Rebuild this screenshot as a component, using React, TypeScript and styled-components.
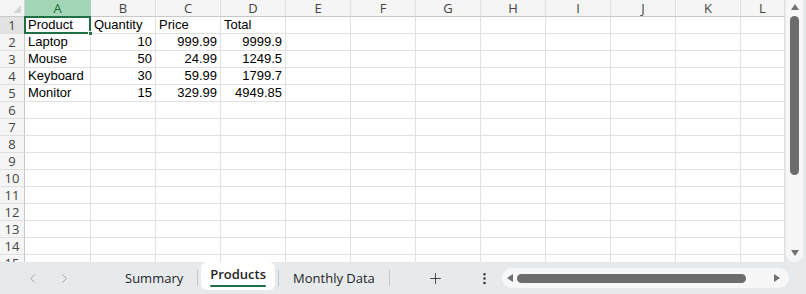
import React from 'react';
import styled, { createGlobalStyle } from 'styled-components';
import { ChevronLeft, ChevronRight, Plus, EllipsisVertical } from 'lucide-react';

const GlobalStyle = createGlobalStyle`
  html, body {
    margin: 0;
    padding: 0;
    background: #e7eaed;
  }
  * {
    box-sizing: border-box;
  }
`;

const Frame = styled.div`
  width: 806px;
  height: 294px;
  display: flex;
  flex-direction: column;
  overflow: hidden;
  background-color: #e7eaed;
`;

const Main = styled.div`
  display: flex;
  height: 262px;
`;

const Sheet = styled.div`
  width: 785px;
  height: 262px;
  overflow: hidden;
  background-color: #ffffff;
  display: grid;
  grid-template-columns: 25px 66px repeat(10, 65px) 44px;
  grid-auto-rows: 17px;
  align-content: start;
`;

const Corner = styled.div`
  position: relative;
  background-color: #f5f5f5;
  border-right: 1px solid #d4d4d4;
  border-bottom: 1px solid #c8c8c8;

  &::after {
    content: '';
    position: absolute;
    right: 3px;
    bottom: 3px;
    width: 0;
    height: 0;
    border-left: 8px solid transparent;
    border-bottom: 8px solid #d6d6d6;
  }
`;

const ColHeader = styled.div<{ $active?: boolean }>`
  display: flex;
  align-items: center;
  justify-content: center;
  font-family: 'Open Sans', 'Liberation Sans', sans-serif;
  font-size: 13px;
  line-height: 16px;
  color: ${(p) => (p.$active ? '#1b6a3c' : '#444444')};
  background-color: ${(p) => (p.$active ? '#a3d6b6' : '#f5f5f5')};
  border-right: 1px solid ${(p) => (p.$active ? '#a3d6b6' : '#e0e0e0')};
  border-bottom: 1px solid ${(p) => (p.$active ? '#1f7145' : '#c8c8c8')};
`;

const RowHeader = styled.div<{ $active?: boolean }>`
  display: flex;
  align-items: center;
  justify-content: center;
  font-family: 'Open Sans', 'Liberation Sans', sans-serif;
  font-size: 13px;
  line-height: 16px;
  color: #444444;
  background-color: ${(p) => (p.$active ? '#e2e2e2' : '#f5f5f5')};
  border-right: 1px solid ${(p) => (p.$active ? '#1f7145' : '#c8c8c8')};
  border-bottom: 1px solid #e0e0e0;
`;

const Cell = styled.div<{ $num?: boolean; $selected?: boolean }>`
  position: relative;
  font-family: 'Liberation Sans', Arial, sans-serif;
  font-size: 13px;
  line-height: 16px;
  color: #000000;
  white-space: nowrap;
  text-align: ${(p) => (p.$num ? 'right' : 'left')};
  padding: 0 3px;
  border-right: 1px solid #e1e1e1;
  border-bottom: 1px solid #e1e1e1;
  z-index: ${(p) => (p.$selected ? 2 : 'auto')};

  ${(p) =>
    p.$selected &&
    `
    &::after {
      content: '';
      position: absolute;
      left: -1px;
      top: -1px;
      right: -1px;
      bottom: -1px;
      border: 2px solid #1f7145;
      pointer-events: none;
    }
  `}
`;

const FillHandle = styled.span`
  position: absolute;
  right: -3px;
  bottom: -3px;
  width: 5px;
  height: 5px;
  background-color: #1f7145;
  border: 1px solid #ffffff;
  z-index: 3;
`;

const VScroll = styled.div`
  width: 21px;
  height: 262px;
  padding: 0 3px 0 1px;
  background-color: #e7eaed;
`;

const VTrack = styled.div`
  height: 100%;
  background-color: #f7f7f7;
  border-radius: 0 0 8px 8px;
  display: flex;
  flex-direction: column;
  align-items: center;
  padding-top: 4px;
  padding-bottom: 6px;
`;

const Arrow = styled.span<{ $dir: 'up' | 'down' | 'left' | 'right' }>`
  width: 0;
  height: 0;
  flex-shrink: 0;
  ${(p) => p.$dir === 'up' && `border-left: 4px solid transparent; border-right: 4px solid transparent; border-bottom: 6px solid #707070;`}
  ${(p) => p.$dir === 'down' && `border-left: 4px solid transparent; border-right: 4px solid transparent; border-top: 6px solid #707070;`}
  ${(p) => p.$dir === 'left' && `border-top: 4px solid transparent; border-bottom: 4px solid transparent; border-right: 6px solid #707070;`}
  ${(p) => p.$dir === 'right' && `border-top: 4px solid transparent; border-bottom: 4px solid transparent; border-left: 6px solid #707070;`}
`;

const VThumb = styled.div`
  width: 9px;
  height: 159px;
  margin-top: 6px;
  border-radius: 5px;
  background-color: #6c6c6c;
`;

const Spacer = styled.div`
  flex: 1;
`;

const TabBar = styled.div`
  height: 32px;
  display: flex;
  align-items: center;
  padding-left: 16px;
  font-family: 'Open Sans', 'Liberation Sans', sans-serif;
  font-size: 13px;
  color: #242424;
`;

const NavButton = styled.div`
  width: 32px;
  height: 32px;
  display: flex;
  align-items: center;
  justify-content: center;
  color: #a0a0a0;
`;

const Tabs = styled.div`
  display: flex;
  align-items: center;
  height: 100%;
  margin-left: 31px;
`;

const Tab = styled.div<{ $active?: boolean }>`
  height: ${(p) => (p.$active ? '28px' : '32px')};
  align-self: flex-start;
  display: flex;
  align-items: center;
  padding: ${(p) => (p.$active ? '0 9px 4px' : '0 14px')};
  margin: ${(p) => (p.$active ? '0 3px' : '0')};
  background-color: ${(p) => (p.$active ? '#ffffff' : 'transparent')};
  border-radius: ${(p) => (p.$active ? '6px' : '0')};
  font-weight: ${(p) => (p.$active ? 600 : 400)};
  position: relative;
  white-space: nowrap;

  ${(p) =>
    p.$active &&
    `
    &::after {
      content: '';
      position: absolute;
      left: 9px;
      right: 9px;
      bottom: 3px;
      height: 2px;
      background-color: #1f7145;
      border-radius: 1px;
    }
  `}
`;

const Separator = styled.span`
  width: 1px;
  height: 16px;
  background-color: #c4c7ca;
`;

const IconButton = styled.div<{ $w: number; $ml: number }>`
  width: ${(p) => p.$w}px;
  margin-left: ${(p) => p.$ml}px;
  height: 32px;
  display: flex;
  align-items: center;
  justify-content: center;
  color: #333333;
`;

const HScroll = styled.div`
  width: 287px;
  height: 20px;
  margin-left: 7px;
  background-color: #f7f7f7;
  border-radius: 10px;
  display: flex;
  align-items: center;
  padding: 0 9px 0 5px;
`;

const HThumb = styled.div`
  width: 229px;
  height: 9px;
  margin-left: 4px;
  border-radius: 5px;
  background-color: #6c6c6c;
`;

const columns = ['A', 'B', 'C', 'D', 'E', 'F', 'G', 'H', 'I', 'J', 'K', 'L'];

const data: (string | number)[][] = [
  ['Product', 'Quantity', 'Price', 'Total'],
  ['Laptop', 10, '999.99', '9999.9'],
  ['Mouse', 50, '24.99', '1249.5'],
  ['Keyboard', 30, '59.99', '1799.7'],
  ['Monitor', 15, '329.99', '4949.85'],
];

const sheets = ['Summary', 'Products', 'Monthly Data'];

const App: React.FC = () => {
  const rows = Array.from({ length: 15 }, (_, i) => i + 1);

  return (
    <Frame>
      <GlobalStyle />
      <Main>
        <Sheet>
          <Corner />
          {columns.map((c) => (
            <ColHeader key={c} $active={c === 'A'}>
              {c}
            </ColHeader>
          ))}
          {rows.map((r) => (
            <React.Fragment key={r}>
              <RowHeader $active={r === 1}>{r}</RowHeader>
              {columns.map((c, ci) => {
                const value = data[r - 1]?.[ci];
                const isNum = r > 1 && value !== undefined && ci > 0;
                const selected = r === 1 && ci === 0;
                return (
                  <Cell key={c} $num={isNum} $selected={selected}>
                    {value}
                    {selected && <FillHandle />}
                  </Cell>
                );
              })}
            </React.Fragment>
          ))}
        </Sheet>
        <VScroll>
          <VTrack>
            <Arrow $dir="up" />
            <VThumb />
            <Spacer />
            <Arrow $dir="down" />
          </VTrack>
        </VScroll>
      </Main>
      <TabBar>
        <NavButton>
          <ChevronLeft size={15} strokeWidth={1.5} />
        </NavButton>
        <NavButton>
          <ChevronRight size={15} strokeWidth={1.5} />
        </NavButton>
        <Tabs>
          {sheets.map((s) => (
            <React.Fragment key={s}>
              <Tab $active={s === 'Products'}>{s}</Tab>
              <Separator />
            </React.Fragment>
          ))}
        </Tabs>
        <IconButton $w={32} $ml={30}>
          <Plus size={17} strokeWidth={1.25} />
        </IconButton>
        <IconButton $w={20} $ml={23}>
          <EllipsisVertical size={15} strokeWidth={2} />
        </IconButton>
        <HScroll>
          <Arrow $dir="left" />
          <HThumb />
          <Spacer />
          <Arrow $dir="right" />
        </HScroll>
      </TabBar>
    </Frame>
  );
};

export default App;
